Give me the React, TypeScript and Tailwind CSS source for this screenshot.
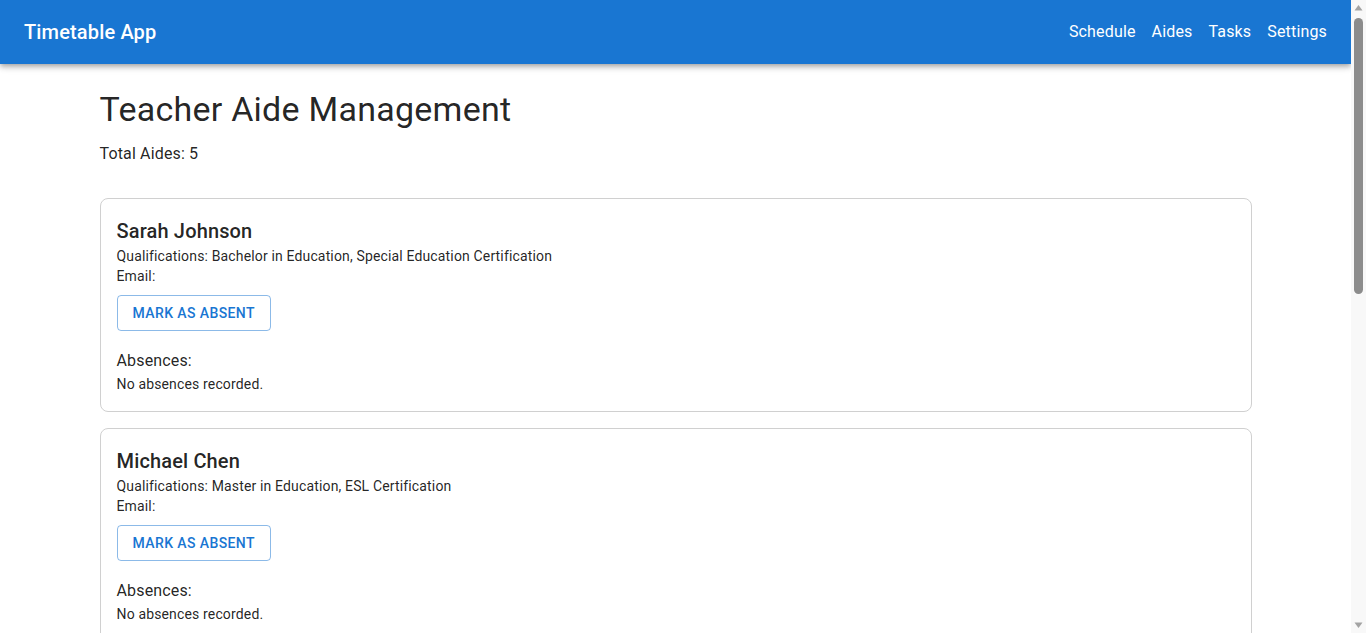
import React from "react";

const aides = [
  { name: "Sarah Johnson", qualifications: "Bachelor in Education, Special Education Certification" },
  { name: "Michael Chen", qualifications: "Master in Education, ESL Certification" },
  { name: "Emily Rodriguez", qualifications: "Certificate III in Education Support" },
  { name: "David Thompson", qualifications: "Bachelor in Psychology, First Aid Certification" },
  { name: "Jessica Williams", qualifications: "Diploma in Early Childhood Education" },
];

function Scrollbar() {
  return (
    <div className="w-[15px] h-screen bg-[#f8f8f8] flex flex-col items-center shrink-0">
      <svg width="15" height="15" viewBox="0 0 15 15" className="shrink-0">
        <path d="M3.5 10.5 L7.5 5 L11.5 10.5 Z" fill="#a3a3a3" />
      </svg>
      <div className="w-[9px] h-[276px] mt-[3px] rounded-full bg-[#8c8c8c]" />
      <div className="flex-1" />
      <svg width="15" height="15" viewBox="0 0 15 15" className="shrink-0">
        <path d="M3.5 4.5 L11.5 4.5 L7.5 10 Z" fill="#a3a3a3" />
      </svg>
    </div>
  );
}

export default function App() {
  return (
    <div className="h-screen flex overflow-hidden bg-white text-[rgba(0,0,0,0.87)] font-['Roboto','Helvetica','Arial',sans-serif]">
      <div className="flex-1 h-screen overflow-hidden">
        <header className="h-16 bg-[#1976d2] text-white flex items-center justify-between px-6 shadow-[0px_2px_4px_-1px_rgba(0,0,0,0.2),0px_4px_5px_0px_rgba(0,0,0,0.14),0px_1px_10px_0px_rgba(0,0,0,0.12)] relative z-10">
          <div className="text-[20px] font-medium leading-[1.6] tracking-[0.0075em]">Timetable App</div>
          <nav className="flex gap-4 text-[16px] font-normal leading-6 tracking-[0.01em]">
            <a className="cursor-pointer">Schedule</a>
            <a className="cursor-pointer">Aides</a>
            <a className="cursor-pointer">Tasks</a>
            <a className="cursor-pointer">Settings</a>
          </nav>
        </header>

        <main className="max-w-[1200px] mx-auto px-6 pt-6 pb-8">
          <h1 className="text-[34px] leading-[42px] font-normal tracking-[0.00735em] mb-3">Teacher Aide Management</h1>
          <p className="text-[16px] leading-6 tracking-[0.00938em] mb-8">Total Aides: {aides.length}</p>

          <div className="flex flex-col gap-4">
            {aides.map((aide) => (
              <div key={aide.name} className="border border-[#d0d0d0] rounded-lg p-4">
                <h2 className="text-[20px] leading-8 font-medium tracking-[0.0075em] -mb-px">{aide.name}</h2>
                <p className="text-[14px] leading-5 tracking-[0.01071em]">Qualifications: {aide.qualifications}</p>
                <p className="text-[14px] leading-5 tracking-[0.01071em] mb-px">Email: </p>
                <button className="mt-2 h-[36px] px-[15px] border border-[rgba(25,118,210,0.5)] rounded text-[#1976d2] text-[14px] font-medium uppercase tracking-[0.02857em] leading-[1.75]">
                  Mark as Absent
                </button>
                <h3 className="mt-4 text-[16px] leading-7 font-normal tracking-[0.00938em]">Absences:</h3>
                <p className="text-[14px] leading-5 tracking-[0.01071em] -mt-px mb-px">No absences recorded.</p>
              </div>
            ))}
          </div>
        </main>
      </div>
      <Scrollbar />
    </div>
  );
}
